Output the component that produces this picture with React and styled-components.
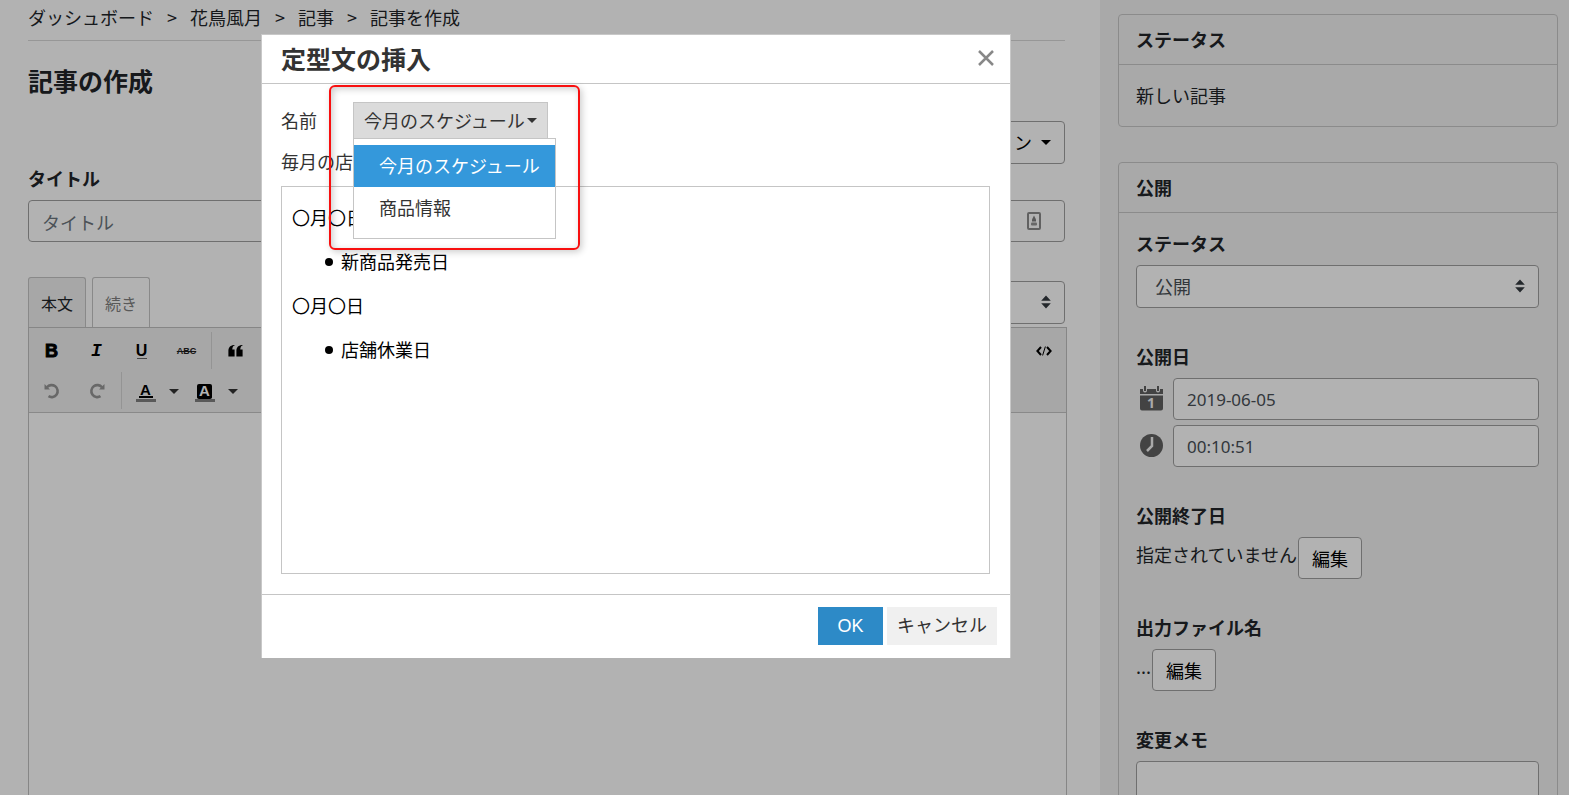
import React from "react";
import styled, { createGlobalStyle } from "styled-components";

const GlobalStyle = createGlobalStyle`
  *, *::before, *::after { box-sizing: border-box; }
  body {
    margin: 0;
    background: #fff;
    color: #212529;
    font-family: "Noto Sans CJK JP", sans-serif;
    font-size: 18px;
    line-height: 27px;
  }
  button, input, select, textarea { font: inherit; color: inherit; }
  h1, h2, p, ul, ol { margin: 0; padding: 0; }
  a { color: inherit; text-decoration: none; }
`;

/* ---------- page ---------- */

const Page = styled.div`
  display: grid;
  grid-template-columns: minmax(0, 1fr) 469px;
  height: 100vh;
  overflow: hidden;
`;

const Main = styled.main`
  display: flex;
  flex-direction: column;
  min-height: 0;
  padding: 0 35px 0 28px;
`;

const Breadcrumb = styled.ol`
  display: flex;
  gap: 13px;
  padding: 4px 0 9px;
  border-bottom: 1px solid #d8d8d8;
  list-style: none;

  li { display: flex; gap: 13px; }
  li + li::before { content: ">"; }
`;

const PageTitle = styled.h1`
  margin-top: 21px;
  font-size: 25px;
  line-height: 36px;
  font-weight: 700;
`;

const ActionRow = styled.div`
  display: flex;
  justify-content: flex-end;
  margin-top: 23px;
`;

const OutlineButton = styled.button`
  display: inline-flex;
  align-items: center;
  gap: 9px;
  height: ${(p) => (p.$tall ? 43 : 42)}px;
  padding: 0 13px;
  border: 1px solid #a0a0a0;
  border-radius: 4px;
  background: #fff;
  color: #000;
`;

const Caret = styled.span`
  border: 5px solid transparent;
  border-top-color: currentColor;
  border-bottom-width: 0;
`;

const Label = styled.label`
  display: block;
  margin-bottom: 8px;
  font-weight: 700;
`;

const LabelText = styled(Label).attrs({ as: "h3" })`
  margin-top: 0;
  font-size: 18px;
`;

const TextInput = styled.input`
  display: block;
  width: 100%;
  height: 42px;
  padding: 1px 13px 0;
  border: 1px solid #a0a0a0;
  border-radius: 4px;
  background: #fff;
  color: #495057;
  font-family: "Noto Sans", "Noto Sans CJK JP", sans-serif;
  font-size: 17px;

  &::placeholder { color: #6c757d; opacity: 1; }
`;

const TitleInput = styled(TextInput)`
  font-size: 18px;
  font-family: "Noto Sans CJK JP", sans-serif;
`;

const TitleField = styled.div`
  margin-top: 1px;
`;

const InputWrap = styled.div`
  position: relative;

  svg {
    position: absolute;
    top: 12px;
    right: 24px;
  }
`;

const SelectWrap = styled.div`
  position: relative;
  width: ${(p) => p.$width || "100%"};

  svg {
    position: absolute;
    top: 14px;
    right: 14px;
    pointer-events: none;
  }
`;

const Select = styled.select`
  display: block;
  width: 100%;
  height: 43px;
  padding: 0 18px;
  border: 1px solid #a0a0a0;
  border-radius: 4px;
  background: #fff;
  color: #495057;
  appearance: none;
`;

/* ---------- editor ---------- */

const EditorHead = styled.div`
  display: flex;
  align-items: center;
  justify-content: space-between;
  margin-top: 35px;
`;

const Tabs = styled.div`
  display: flex;
  gap: 6px;
`;

const Tab = styled.button`
  height: 50px;
  padding: 2px 12px 0;
  border: 1px solid #c4c4c4;
  border-bottom: 0;
  border-radius: 3px 3px 0 0;
  background: ${(p) => (p.$active ? "#f0f0f0" : "#fff")};
  color: ${(p) => (p.$active ? "#212529" : "#808080")};
  font-size: 16px;
`;

const Editor = styled.div`
  display: flex;
  flex: 1;
  flex-direction: column;
  margin-right: -2px;
  border: 1px solid #c0c0c0;
  border-bottom: 0;
`;

const Toolbar = styled.div`
  padding: 3px 0 1px;
  border-bottom: 1px solid #c4c4c4;
  background: #f0f0f0;
`;

const ToolRow = styled.div`
  display: flex;
  height: 40px;
`;

const Separator = styled.span`
  width: 1px;
  margin: 1px 1px 2px 2px;
  background: #d4d4d4;
`;

const ToolButton = styled.button`
  display: flex;
  align-items: center;
  justify-content: center;
  width: ${(p) => (p.$narrow ? 12 : 45)}px;
  margin-left: ${(p) => (p.$end ? "auto" : 0)};
  margin-right: ${(p) => (p.$narrow ? 2 : 0)}px;
  padding: 0;
  border: 0;
  background: none;
  color: ${(p) => (p.$muted ? "#969696" : p.$narrow ? "#333" : "#000")};
`;

const Glyph = styled.span`
  font: 700 18px/18px "Liberation Sans", sans-serif;
  font-family: ${(p) => (p.$italic ? '"Liberation Mono", monospace' : '"Liberation Sans", sans-serif')};
  font-style: ${(p) => (p.$italic ? "italic" : "normal")};
  -webkit-text-stroke: ${(p) => (p.$heavy ? "1px #000" : "0")};
`;

const UnderlineGlyph = styled.span`
  width: 10px;
  margin-top: 1px;
  border-bottom: 1px solid #666;
  font: 700 16px/14px "Liberation Sans", sans-serif;
  display: flex;
  justify-content: center;
`;

const StrikeGlyph = styled.span`
  font: 700 9px/12px "Liberation Sans", sans-serif;
  color: #222;
  text-decoration: line-through;
`;

const ColorGlyph = styled.span`
  display: flex;
  flex-direction: column;
  align-items: center;
  width: 20px;
  margin-top: 3px;
  border-bottom: 3px solid #808080;

  span {
    width: ${(p) => (p.$filled ? 15 : 14)}px;
    margin-bottom: ${(p) => (p.$filled ? 0 : 1)}px;
    border-bottom: 2px solid #000;
    border-radius: ${(p) => (p.$filled ? "2px" : 0)};
    background: ${(p) => (p.$filled ? "#000" : "none")};
    color: ${(p) => (p.$filled ? "#fff" : "#000")};
    font: 700 15px/13px "Liberation Sans", sans-serif;
    text-align: center;
  }
`;

/* ---------- side column ---------- */

const Sidebar = styled.aside`
  display: flex;
  flex-direction: column;
  gap: 35px;
  min-height: 0;
  overflow: hidden;
  padding: 14px 11px 0 18px;
  background: #f3f3f3;
`;

const Card = styled.section`
  flex: none;
  border: 1px solid #c8c8c8;
  border-radius: 4px;
`;

const CardTitle = styled.h2`
  padding: 11px 17px;
  border-bottom: 1px solid #c8c8c8;
  font-size: 18px;
  line-height: 27px;
  font-weight: 700;
`;

const CardBody = styled.div`
  display: flex;
  flex-direction: column;
  gap: 35px;
  padding: 17px 18px 17px 17px;
`;

const IconRow = styled.div`
  display: flex;
  align-items: center;
  gap: 10px;
  padding-left: 4px;

  & + & { margin-top: 5px; }
  svg { flex: none; margin-bottom: 2px; }
`;

const EditRow = styled.div`
  display: flex;
  align-items: flex-start;
  gap: 1px;
`;

const Value = styled.span`
  line-height: 34px;
`;

const Memo = styled.textarea`
  display: block;
  width: 100%;
  height: 100px;
  border: 1px solid #a0a0a0;
  border-radius: 4px;
  background: #fff;
  resize: none;
`;

/* ---------- dialog ---------- */

const Overlay = styled.div`
  position: fixed;
  inset: 0;
  display: flex;
  align-items: flex-start;
  padding: 34px 0 0 261px;
  background: rgba(0, 0, 0, 0.3);
`;

const Dialog = styled.div`
  position: relative;
  width: 750px;
  border: 1px solid #c8c8c8;
  border-bottom: 0;
  background: #fff;
  color: #333;
`;

const DialogHead = styled.div`
  display: flex;
  align-items: center;
  justify-content: space-between;
  height: 49px;
  padding: 0 16px 2px 19px;
  border-bottom: 1px solid #c5c5c5;

  h2 {
    font-size: 25px;
    line-height: 36px;
  }
`;

const CloseButton = styled.button`
  display: flex;
  padding: 0;
  border: 0;
  background: none;
`;

const DialogBody = styled.div`
  padding: 18px 20px 20px 19px;
`;

const NameRow = styled.div`
  display: flex;
  align-items: center;
  gap: 36px;
`;

const Dropdown = styled.div`
  position: relative;
`;

const DropdownButton = styled.button`
  display: flex;
  align-items: center;
  gap: 2px;
  height: 37px;
  padding: 0 10px;
  border: 1px solid #c5c5c5;
  background: #dbdbdb;
  color: #333;
`;

const Menu = styled.ul`
  position: absolute;
  top: 36px;
  left: 0;
  width: 203px;
  padding: 6px 0 9px;
  border: 1px solid #c5c5c5;
  background: #fff;
  list-style: none;
`;

const MenuItem = styled.button`
  display: block;
  width: 100%;
  height: 42px;
  padding: 0 0 1px 25px;
  border: 0;
  background: ${(p) => (p.$active ? "#3498db" : "#fff")};
  color: ${(p) => (p.$active ? "#fff" : "#333")};
  text-align: left;
  white-space: nowrap;
`;

const Description = styled.p`
  margin: 9px 0 11px;
`;

const Preview = styled.div`
  height: 388px;
  padding: 17px 10px;
  border: 1px solid #c5c5c5;
  color: #000;

  ul {
    padding-left: 33px;
    list-style: none;
  }
  li {
    display: flex;
    align-items: center;
    gap: 8px;
  }
  li::before {
    content: "";
    width: 8px;
    height: 8px;
    border-radius: 50%;
    background: #000;
  }
  p, ul { margin-bottom: 17px; }
`;

const DialogFoot = styled.div`
  display: flex;
  justify-content: flex-end;
  gap: 4px;
  padding: 12px 13px 13px;
  border-top: 1px solid #c5c5c5;
`;

const DialogButton = styled.button`
  min-width: 65px;
  height: 38px;
  padding: 0 10px;
  border: 0;
  background: ${(p) => (p.$primary ? "#2d8ac7" : "#f0f0f0")};
  color: ${(p) => (p.$primary ? "#fff" : "#333")};
  font-family: "Liberation Sans", "Noto Sans CJK JP", sans-serif;
`;

const Highlight = styled.div`
  position: absolute;
  top: 50px;
  left: 67px;
  z-index: 2;
  width: 251px;
  height: 165px;
  border: 2px solid #f80f0f;
  border-radius: 6px;
  box-shadow: 2px 2px 7px rgba(0, 0, 0, 0.2), inset 2px 2px 7px rgba(0, 0, 0, 0.2);
  pointer-events: none;
`;

/* ---------- icons ---------- */

const SortIcon = () => (
  <svg width="10" height="14" viewBox="0 0 10 14" fill="#343a40" aria-hidden="true">
    <path d="M5 0.5 9.8 5.8H.2zM5 13.5 9.8 8.2H.2z" />
  </svg>
);

const ContactIcon = () => (
  <svg width="14" height="18" viewBox="0 0 14 18" aria-hidden="true">
    <rect x="1" y="1" width="12" height="16" rx="1" fill="none" stroke="#8c8c8c" strokeWidth="2" />
    <path d="M7 3.500 9 7.5V9.500H5V7.5z" fill="#808080" />
    <rect x="4" y="10.5" width="6" height="3" rx="1" fill="#959595" />
  </svg>
);

const QuoteIcon = () => (
  <svg width="15" height="12" viewBox="0 0 15 12" aria-hidden="true">
    <path d="M6.6.4C5.2.4 4.300 2.100 4.300 4.600H6.600V11.600H.4V6C.4 2.300 2.600 0 6.600 0zM14.600.4C13.200.4 12.300 2.100 12.300 4.600H14.600V11.600H8.400V6C8.400 2.300 10.600 0 14.600 0z" />
  </svg>
);

const CodeIcon = () => (
  <svg width="16" height="10" viewBox="0 0 16 10" fill="none" stroke="#000" strokeWidth="2" aria-hidden="true">
    <path d="M5 1 1.400 5 5 9M11 1 14.600 5 11 9" />
    <path d="M9.400.5 6.600 9.500" strokeWidth="1" />
  </svg>
);

const TurnIcon = ({ redo }) => (
  <svg width="16" height="16" viewBox="0 0 16 16" fill="none" stroke="currentColor" strokeWidth="2.600" aria-hidden="true">
    <g transform={redo ? "translate(16 0) scale(-1 1)" : undefined}>
      <path d="M3 4.300A6 6 0 1 1 4.500 13.200" />
      <path d="M.5 1V6.500H6z" fill="currentColor" stroke="none" />
    </g>
  </svg>
);

const CalendarIcon = () => (
  <svg width="23" height="25" viewBox="0 0 23 25" aria-hidden="true">
    <path
      fill="#606060"
      d="M0 3h3v1.500a2 2 0 0 0 4 0V3h9v1.500a2 2 0 0 0 4 0V3h3v5H0zM0 9.500h23V22.500a2 2 0 0 1-2 2H2a2 2 0 0 1-2-2zM4 0h2v5H4zM17 0h2v5h-2z"
    />
    <text x="11" y="22" textAnchor="middle" fill="#f3f3f3" fontFamily="Noto Sans" fontSize="14" fontWeight="700">
      1
    </text>
  </svg>
);

const ClockIcon = () => (
  <svg width="23" height="23" viewBox="0 0 23 23" aria-hidden="true">
    <circle cx="11.500" cy="11.500" r="11.500" fill="#606060" />
    <path d="M12 3V12L7 17" fill="none" stroke="#f3f3f3" strokeWidth="2.500" />
  </svg>
);

const CloseIcon = () => (
  <svg width="16" height="16" viewBox="0 0 16 16" stroke="#888" strokeWidth="2.500" aria-hidden="true">
    <path d="M1 1 15 15M15 1 1 15" />
  </svg>
);

/* ---------- views ---------- */

const crumbs = ["ダッシュボード", "花鳥風月", "記事", "記事を作成"];

function ArticleForm() {
  return (
    <Main>
      <nav aria-label="パンくず">
        <Breadcrumb>
          {crumbs.map((c) => (
            <li key={c}><a href="#">{c}</a></li>
          ))}
        </Breadcrumb>
      </nav>
      <PageTitle>記事の作成</PageTitle>
      <ActionRow>
        <OutlineButton type="button" $tall>アクション<Caret /></OutlineButton>
      </ActionRow>
      <TitleField>
        <Label htmlFor="title">タイトル</Label>
        <InputWrap>
          <TitleInput id="title" placeholder="タイトル" />
          <ContactIcon />
        </InputWrap>
      </TitleField>
      <EditorHead>
        <Tabs role="tablist">
          <Tab type="button" role="tab" aria-selected="true" $active>本文</Tab>
          <Tab type="button" role="tab" aria-selected="false">続き</Tab>
        </Tabs>
        <SelectWrap $width="220px">
          <Select aria-label="フォーマット"><option>リッチテキスト</option></Select>
          <SortIcon />
        </SelectWrap>
      </EditorHead>
      <Editor>
        <Toolbar role="toolbar">
          <ToolRow>
            <ToolButton type="button" aria-label="太字"><Glyph $heavy>B</Glyph></ToolButton>
            <ToolButton type="button" aria-label="斜体"><Glyph $italic>I</Glyph></ToolButton>
            <ToolButton type="button" aria-label="下線"><UnderlineGlyph>U</UnderlineGlyph></ToolButton>
            <ToolButton type="button" aria-label="取り消し線"><StrikeGlyph>ABC</StrikeGlyph></ToolButton>
            <Separator />
            <ToolButton type="button" aria-label="引用"><QuoteIcon /></ToolButton>
            <ToolButton type="button" aria-label="ソースコード" $end><CodeIcon /></ToolButton>
          </ToolRow>
          <ToolRow>
            <ToolButton type="button" aria-label="元に戻す" $muted><TurnIcon /></ToolButton>
            <ToolButton type="button" aria-label="やり直し" $muted><TurnIcon redo /></ToolButton>
            <Separator />
            <ToolButton type="button" aria-label="文字色"><ColorGlyph><span>A</span></ColorGlyph></ToolButton>
            <ToolButton type="button" aria-label="文字色を選択" $narrow><Caret /></ToolButton>
            <ToolButton type="button" aria-label="背景色"><ColorGlyph $filled><span>A</span></ColorGlyph></ToolButton>
            <ToolButton type="button" aria-label="背景色を選択" $narrow><Caret /></ToolButton>
          </ToolRow>
        </Toolbar>
      </Editor>
    </Main>
  );
}

function PublishPanel() {
  return (
    <Sidebar>
      <Card>
        <CardTitle>ステータス</CardTitle>
        <CardBody><p>新しい記事</p></CardBody>
      </Card>
      <Card>
        <CardTitle>公開</CardTitle>
        <CardBody>
          <div>
            <Label htmlFor="status">ステータス</Label>
            <SelectWrap>
              <Select id="status"><option>公開</option></Select>
              <SortIcon />
            </SelectWrap>
          </div>
          <div>
            <Label htmlFor="date">公開日</Label>
            <IconRow><CalendarIcon /><TextInput id="date" defaultValue="2019-06-05" /></IconRow>
            <IconRow><ClockIcon /><TextInput aria-label="公開時刻" defaultValue="00:10:51" /></IconRow>
          </div>
          <div>
            <LabelText>公開終了日</LabelText>
            <EditRow><Value>指定されていません</Value><OutlineButton type="button">編集</OutlineButton></EditRow>
          </div>
          <div>
            <LabelText>出力ファイル名</LabelText>
            <EditRow><Value>...</Value><OutlineButton type="button">編集</OutlineButton></EditRow>
          </div>
          <div>
            <Label htmlFor="memo">変更メモ</Label>
            <Memo id="memo" />
          </div>
        </CardBody>
      </Card>
    </Sidebar>
  );
}

function TemplateDialog() {
  return (
    <Overlay>
      <Dialog role="dialog" aria-labelledby="dialog-title">
        <DialogHead>
          <h2 id="dialog-title">定型文の挿入</h2>
          <CloseButton type="button" aria-label="閉じる"><CloseIcon /></CloseButton>
        </DialogHead>
        <DialogBody>
          <NameRow>
            <label htmlFor="template">名前</label>
            <Dropdown>
              <DropdownButton id="template" type="button" aria-haspopup="true" aria-expanded="true">
                今月のスケジュール<Caret />
              </DropdownButton>
              <Menu>
                <li><MenuItem type="button" $active>今月のスケジュール</MenuItem></li>
                <li><MenuItem type="button">商品情報</MenuItem></li>
              </Menu>
            </Dropdown>
          </NameRow>
          <Description>毎月の店舗</Description>
          <Preview>
            <p>〇月〇日</p>
            <ul><li>新商品発売日</li></ul>
            <p>〇月〇日</p>
            <ul><li>店舗休業日</li></ul>
          </Preview>
        </DialogBody>
        <DialogFoot>
          <DialogButton type="button" $primary>OK</DialogButton>
          <DialogButton type="button">キャンセル</DialogButton>
        </DialogFoot>
        <Highlight />
      </Dialog>
    </Overlay>
  );
}

export default function App() {
  return (
    <>
      <GlobalStyle />
      <Page>
        <ArticleForm />
        <PublishPanel />
      </Page>
      <TemplateDialog />
    </>
  );
}
